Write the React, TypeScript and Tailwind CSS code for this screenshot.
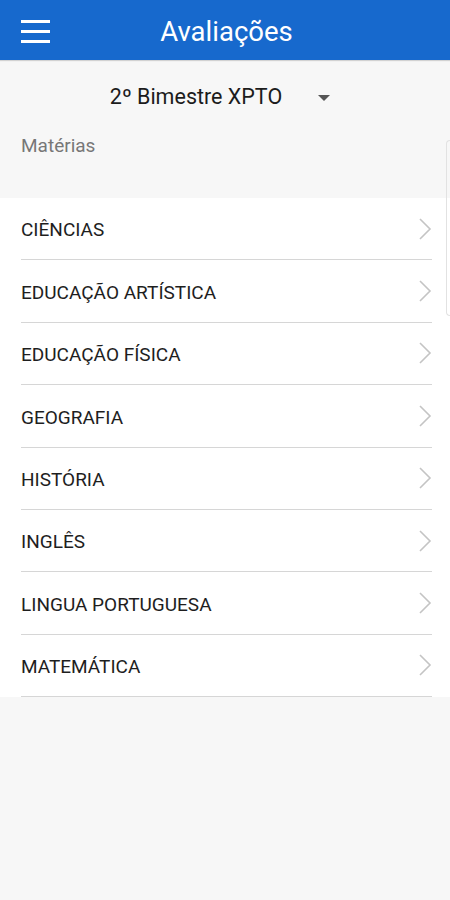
import React from "react";

const materias = [
    "CIÊNCIAS",
    "EDUCAÇÃO ARTÍSTICA",
    "EDUCAÇÃO FÍSICA",
    "GEOGRAFIA",
    "HISTÓRIA",
    "INGLÊS",
    "LINGUA PORTUGUESA",
    "MATEMÁTICA",
];

function Chevron() {
    return (
        <svg width="14" height="24" viewBox="0 0 14 24" fill="none">
            <path d="M2 2 L12 12 L2 22" stroke="#c4c4c4" strokeWidth="1.6" />
        </svg>
    );
}

export default function App() {
    return (
        <div className="min-h-[900px] bg-[#f7f7f7] flex flex-col relative" style={{ fontFamily: "Roboto, 'Liberation Sans', sans-serif" }}>
            <header className="h-[60px] bg-[#1769cd] flex items-center px-[21px] relative shadow-[0_1px_1px_rgba(0,0,0,0.15)]">
                <div className="flex flex-col gap-[7px] w-[29px] mt-[2px]">
                    <span className="block h-[3px] bg-white"></span>
                    <span className="block h-[3px] bg-white"></span>
                    <span className="block h-[3px] bg-white"></span>
                </div>
                <h1 className="absolute left-0 right-0 top-[14px] text-center text-white text-[27.5px] leading-[36px] pl-[3px] pointer-events-none">Avaliações</h1>
            </header>

            <div className="h-[74px] flex items-center justify-center pt-[1px]">
                <span className="text-[21.5px] text-[#1c1c1c] ml-[-10px]">2º Bimestre XPTO</span>
                <svg width="12" height="6" viewBox="0 0 12 6" className="ml-[36px]">
                    <path d="M0 0 L12 0 L6 6 Z" fill="#555" />
                </svg>
            </div>

            <div className="px-[21px] text-[19px] text-[#777] h-[64px] leading-[24px]">Matérias</div>

            <ul className="bg-white">
                {materias.map(m => (
                    <li key={m} className="ml-[21px] mr-[18px] h-[62.4px] border-b-[1.5px] border-[#d6d6d6] flex items-center justify-between">
                        <span className="text-[19px] text-[#1e1e1e] pt-[4px]">{m}</span>
                        <Chevron />
                    </li>
                ))}
            </ul>

            <div className="absolute right-0 top-[140px] h-[176px] w-[4px] border-l border-y border-[#e2e2e2] rounded-l-[4px]"></div>
        </div>
    );
}
